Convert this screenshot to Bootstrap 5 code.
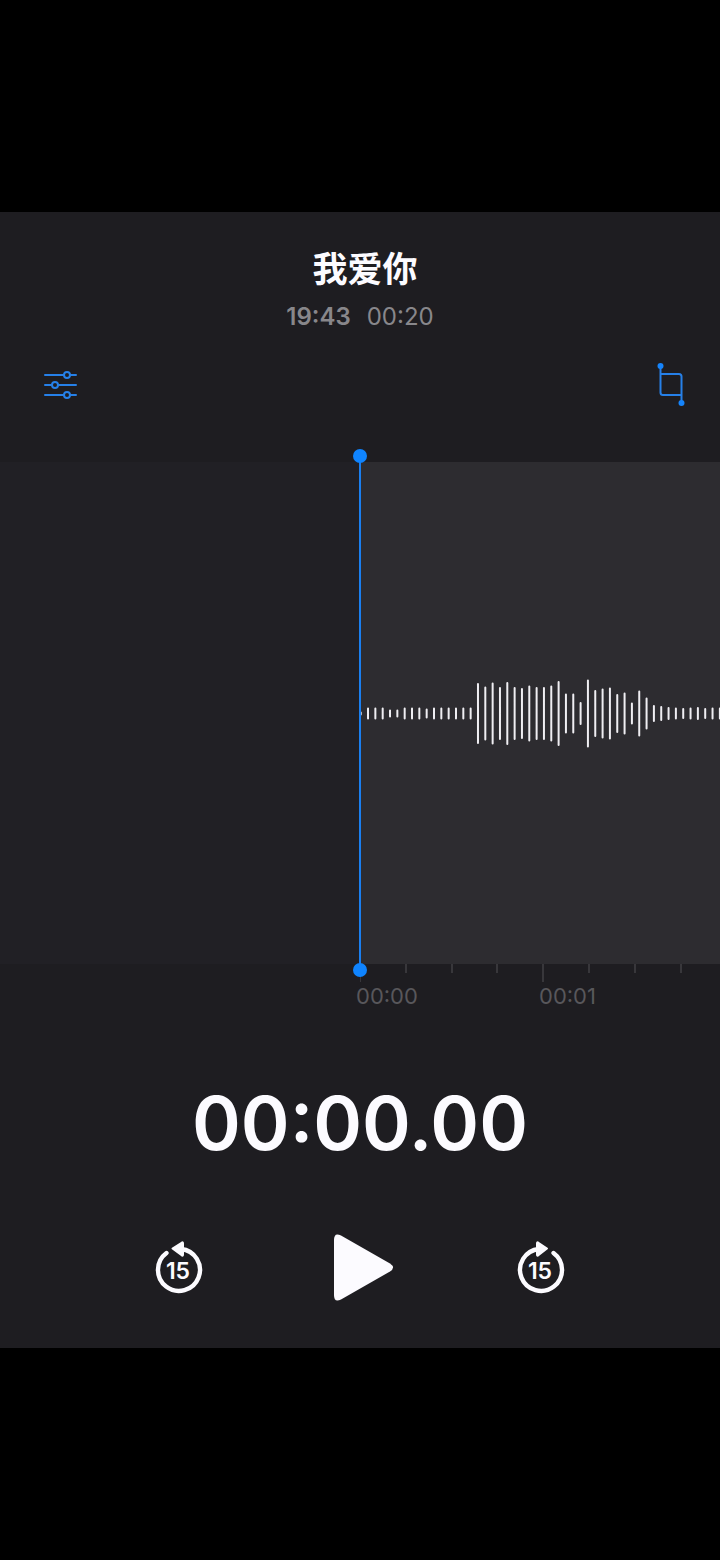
<!DOCTYPE html>
<html lang="zh-CN" data-bs-theme="dark">
<head>
<meta charset="utf-8">
<meta name="viewport" content="width=device-width, initial-scale=1">
<title>我爱你</title>
<link href="https://cdn.jsdelivr.net/npm/bootstrap@5.3.0/dist/css/bootstrap.min.css" rel="stylesheet">
<style>
  body { background: #000; font-family: Inter, "Noto Sans CJK SC", sans-serif; }
  .recorder { background: #1e1d21; padding: 32px 0 40px; }
  .rec-title { font-size: 35px; line-height: 50px; font-weight: 700; color: #fcfbff; padding-left: 10px; }
  .rec-meta { font-size: 24px; line-height: 30px; color: #88878b; gap: 16px; margin-top: 8px; }
  .rec-tools { margin-top: 28px; padding: 0 32px; }
  .icon-btn { border: 0; background: none; padding: 0; line-height: 0; color: #fcfbff; }
  .icon-btn svg { display: block; }
  .rec-tools .icon-btn { color: #2680e8; }
  .track { margin-top: 52px; height: 502px; background: #212025; }
  .take { background: #2d2c30; }
  .playhead { top: -6px; bottom: -6px; left: 50%; width: 2px; margin-left: -1px; background: #1a7ff0; }
  .playhead::before, .playhead::after { content: ""; position: absolute; left: -6px; width: 14px; height: 14px; border-radius: 50%; background: #0f84ff; }
  .playhead::before { top: -7px; }
  .playhead::after { bottom: -7px; }
  .ruler-labels { font-size: 22px; line-height: 28px; color: #58575b; margin-left: -4px; }
  .ruler-labels span { flex: 0 0 183px; }
  .clock { font-size: 74px; line-height: 90px; font-weight: 600; color: #fcfbff; margin-top: 68px; }
  .controls { margin-top: 60px; padding: 0 12.5%; }
</style>
</head>
<body class="min-vh-100 d-flex flex-column justify-content-center">
<main class="recorder">
  <header class="text-center">
    <h1 class="rec-title m-0">我爱你</h1>
    <div class="rec-meta d-flex justify-content-center"><span class="fw-semibold">19:43</span><span>00:20</span></div>
  </header>

  <div class="rec-tools d-flex justify-content-between">
    <button type="button" class="icon-btn" aria-label="选项">
      <svg width="58" height="50" fill="none" stroke="currentColor" stroke-width="2" stroke-linecap="round">
        <path d="M13 15H31M38 15H44M13 25H19M27 25H44M13 35H31M38 35H44"/>
        <circle cx="35" cy="15" r="3"/><circle cx="23" cy="25" r="3"/><circle cx="35" cy="35" r="3"/>
      </svg>
    </button>
    <button type="button" class="icon-btn" aria-label="修剪">
      <svg width="34" height="50" fill="none" stroke="currentColor" stroke-width="2">
        <path d="M6.500 6V32.500Q6.500 35 9 35H27.500M6.500 14H25Q27.500 14 27.500 16.500V43"/>
        <g fill="#1684fb" stroke="none"><circle cx="6.500" cy="6" r="3"/><circle cx="27.500" cy="43" r="3"/></g>
      </svg>
    </button>
  </div>

  <section class="track row g-0 position-relative" aria-label="波形">
    <div class="take col-6 offset-6 h-100 overflow-hidden">
      <svg class="d-block" width="100%" height="502"><path id="wave" stroke="#efeef2" stroke-width="2" stroke-linecap="round"/></svg>
    </div>
    <div class="playhead position-absolute"></div>
  </section>
  <div class="row g-0">
    <div class="col-6 offset-6">
      <svg class="d-block" width="100%" height="18"><path id="ticks" stroke="#38373b" stroke-width="2"/></svg>
      <div class="ruler-labels d-flex"><span>00:00</span><span>00:01</span></div>
    </div>
  </div>

  <div class="clock text-center">00:00.00</div>

  <div class="controls row g-0 align-items-center text-center">
    <div class="col-4 d-flex justify-content-center">
      <button type="button" class="icon-btn" aria-label="后退15秒">
        <svg width="60" height="80">
          <path d="M16.500 25A21 21 0 1 0 31 21" fill="none" stroke="currentColor" stroke-width="4.400" stroke-linecap="round"/>
          <path d="M22.500 20.500L32 14.500Q33 14 33 15.500V26.500Q33 28 32 27.500Z" fill="currentColor" stroke="currentColor" stroke-width="2" stroke-linejoin="round"/>
          <text x="28" y="51" text-anchor="middle" font-size="23" font-weight="600" fill="currentColor">15</text>
        </svg>
      </button>
    </div>
    <div class="col-4 d-flex justify-content-center">
      <button type="button" class="icon-btn" aria-label="播放">
        <svg width="72" height="80"><path d="M10 12Q10 4 17 7.500L66 35.500Q72 39.500 66 43.500L17 71.500Q10 75 10 67Z" fill="currentColor"/></svg>
      </button>
    </div>
    <div class="col-4 d-flex justify-content-center">
      <button type="button" class="icon-btn" aria-label="前进15秒">
        <svg width="60" height="80">
          <path d="M43.500 25A21 21 0 1 1 29 21" fill="none" stroke="currentColor" stroke-width="4.400" stroke-linecap="round"/>
          <path d="M37 20.500L28 14.500Q27 14 27 15.500V26.500Q27 28 28 27.500Z" fill="currentColor" stroke="currentColor" stroke-width="2" stroke-linejoin="round"/>
          <text x="30" y="51" text-anchor="middle" font-size="23" font-weight="600" fill="currentColor">15</text>
        </svg>
      </button>
    </div>
  </div>
</main>
<script src="https://cdn.jsdelivr.net/npm/bootstrap@5.3.0/dist/js/bootstrap.bundle.min.js"></script>
<script>
  // Sample levels, one bar each, 22 bars to every 161 px
  const levels = [4,12,12,12,8,8,12,12,12,10,12,12,12,12,12,12,61,54,62,53,63,53,51,56,53,53,56,65,40,40,23,68,47,50,52,39,42,22,46,32,17,15,13,12,11,12,13,11,12,12];
  document.getElementById('wave').setAttribute('d', levels.map((h, i) =>
    `M${(0.7 + i * 7.33).toFixed(2)} ${251.5 - h / 2 + 1}v${h - 2}`).join(''));
  // Four ticks to a second, the first one of each longer
  document.getElementById('ticks').setAttribute('d', Array.from({length: 40}, (_, i) =>
    `M${Math.round(i * 45.83)} 0v${i % 4 ? 9 : 18}`).join(''));
</script>
</body>
</html>
